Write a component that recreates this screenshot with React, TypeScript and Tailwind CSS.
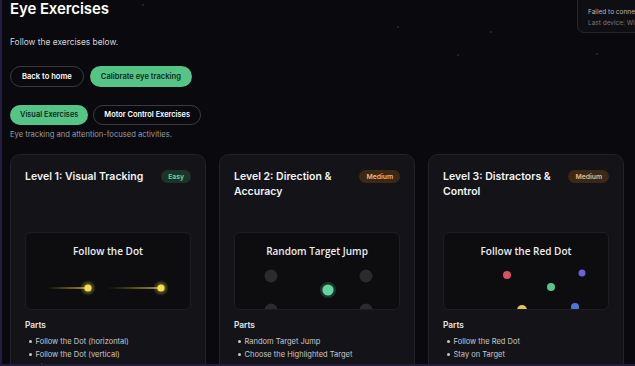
import React from "react";

type Level = {
  title: string;
  badge: string;
  tone: "easy" | "medium";
  preview: string;
  parts: string[];
  scene: React.ReactNode;
};

function DotTrail() {
  return (
    <svg width="165" height="78" className="absolute inset-0">
      <defs>
        <linearGradient id="trail" x1="0" x2="1" y1="0" y2="0">
          <stop offset="0" stopColor="#e8d34a" stopOpacity="0" />
          <stop offset="1" stopColor="#e8d34a" stopOpacity="0.8" />
        </linearGradient>
        <radialGradient id="glow">
          <stop offset="0" stopColor="#f5e35a" stopOpacity="0.6" />
          <stop offset="1" stopColor="#f5e35a" stopOpacity="0" />
        </radialGradient>
      </defs>
      <rect x="21" y="54.2" width="40" height="1.6" fill="url(#trail)" />
      <rect x="82" y="54.2" width="52" height="1.6" fill="url(#trail)" />
      <circle cx="62" cy="55" r="8" fill="url(#glow)" />
      <circle cx="135" cy="55" r="8" fill="url(#glow)" />
      <circle cx="62" cy="55" r="3.6" fill="#f3e04e" />
      <circle cx="135" cy="55" r="3.6" fill="#f3e04e" />
    </svg>
  );
}

function TargetJump() {
  return (
    <svg width="165" height="78" className="absolute inset-0">
      <circle cx="36" cy="43" r="6.5" fill="#2b2a2f" />
      <circle cx="131" cy="43" r="6.5" fill="#2b2a2f" />
      <circle cx="36" cy="77" r="6.5" fill="#2b2a2f" />
      <circle cx="131" cy="77" r="6.5" fill="#2b2a2f" />
      <circle cx="93" cy="57" r="8" fill="#5fd49a" opacity="0.2" />
      <circle cx="93" cy="57" r="5.6" fill="#62d69c" />
    </svg>
  );
}

function RedDot() {
  return (
    <svg width="165" height="78" className="absolute inset-0">
      <circle cx="63" cy="42" r="4" fill="#d9505e" />
      <circle cx="138" cy="40" r="3.5" fill="#6a62d6" />
      <circle cx="107" cy="54" r="4" fill="#56c48d" />
      <circle cx="131" cy="74" r="4" fill="#4677dc" />
      <circle cx="78" cy="77" r="5" fill="#e3c45a" />
    </svg>
  );
}

const levels: Level[] = [
  {
    title: "Level 1: Visual Tracking",
    badge: "Easy",
    tone: "easy",
    preview: "Follow the Dot",
    parts: ["Follow the Dot (horizontal)", "Follow the Dot (vertical)", "Circle Path"],
    scene: <DotTrail />,
  },
  {
    title: "Level 2: Direction & Accuracy",
    badge: "Medium",
    tone: "medium",
    preview: "Random Target Jump",
    parts: ["Random Target Jump", "Choose the Highlighted Target"],
    scene: <TargetJump />,
  },
  {
    title: "Level 3: Distractors & Control",
    badge: "Medium",
    tone: "medium",
    preview: "Follow the Red Dot",
    parts: ["Follow the Red Dot", "Stay on Target"],
    scene: <RedDot />,
  },
];

const stars = [
  [140, 4], [488, 31], [455, 54], [594, 53], [605, 170], [525, 190], [395, 26], [470, 160],
];

export default function App() {
  return (
    <div
      className="relative w-[635px] h-[366px] overflow-hidden bg-[#0a0a0e] border-l-2 border-b-2 border-[#221c3f] text-white"
      style={{ fontFamily: "Inter, 'Noto Sans', sans-serif" }}
    >
      {/* faint stars */}
      {stars.map(([x, y], i) => (
        <div
          key={i}
          className="absolute w-[2px] h-[2px] rounded-full bg-[#2a2a35]"
          style={{ left: x, top: y }}
        />
      ))}

      {/* connection toast, cut off at the corner */}
      <div className="absolute left-[575px] top-[-12px] w-[120px] h-[45px] rounded-[7px] border border-[#26262c] bg-[#0f0f13] pl-[10px] pt-[18px]">
        <div className="text-[6.5px] leading-[11px] text-[#b8b8be] whitespace-nowrap">Failed to connect</div>
        <div className="text-[6.5px] leading-[11px] text-[#77777e] whitespace-nowrap">Last device: Wii</div>
      </div>

      <div className="relative pl-[8px] pr-[11px]">
        <h1 className="mt-0 text-[15px] leading-[18px] font-semibold tracking-[-0.1px]">Eye Exercises</h1>
        <p className="mt-[18px] text-[8.4px] leading-[12px] text-[#d4d4d8]">Follow the exercises below.</p>

        <div className="mt-[18px] flex gap-[6px]">
          <button className="h-[21px] px-[11px] rounded-full border border-[#3a3a40] text-[7.6px] font-semibold text-white">
            Back to home
          </button>
          <button className="h-[21px] px-[11px] rounded-full bg-[#57c487] text-[7.6px] font-semibold text-[#0e2a1a]">
            Calibrate eye tracking
          </button>
        </div>

        <div className="mt-[18px] flex gap-[5px]">
          <button className="h-[20px] px-[10px] rounded-full bg-[#57c487] text-[7.4px] font-semibold text-[#0e2a1a]">
            Visual Exercises
          </button>
          <button className="h-[20px] px-[10px] rounded-full border border-[#3a3a40] text-[7.4px] font-semibold text-white">
            Motor Control Exercises
          </button>
        </div>
        <p className="mt-[4px] text-[7.6px] leading-[11px] text-[#9a9aa0]">
          Eye tracking and attention-focused activities.
        </p>

        <div className="mt-[14px] grid grid-cols-3 gap-[13px]">
          {levels.map((lv) => (
            <div
              key={lv.title}
              className="h-[240px] rounded-[10px] border border-[#222228] bg-[#141418] px-[14px] pt-[14px]"
            >
              <div className="flex items-start justify-between gap-[8px] h-[50px]">
                <div className="flex-1 min-w-0 text-[10.5px] leading-[15px] font-semibold text-[#f2f2f4]">
                  {lv.title}
                </div>
                <span
                  className={
                    lv.tone === "easy"
                      ? "shrink-0 mt-[1px] h-[13px] px-[7px] rounded-full bg-[#1b3628] text-[6.8px] leading-[13px] font-semibold text-[#7ad3a0]"
                      : "shrink-0 mt-[1px] h-[13px] px-[7px] rounded-full bg-[#3a2915] text-[6.8px] leading-[13px] font-semibold text-[#e8b98a]"
                  }
                >
                  {lv.badge}
                </span>
              </div>

              <div className="relative mt-[13px] h-[78px] overflow-hidden rounded-[6px] border border-[#1d1d22] bg-[#0d0d10]">
                <div
                  className="relative pt-[11px] text-center text-[10px] leading-[14px] font-semibold text-[#ececef]"
                  style={{ fontFamily: "'Open Sans', 'Noto Sans', sans-serif" }}
                >
                  {lv.preview}
                </div>
                {lv.scene}
              </div>

              <div className="mt-[9px] text-[8.3px] leading-[12px] font-semibold text-[#e4e4e7]">Parts</div>
              <ul className="mt-[4px] pl-[4px]">
                {lv.parts.map((p) => (
                  <li key={p} className="flex items-center gap-[4px] text-[7.5px] leading-[13px] text-[#c8c8cd]">
                    <span className="w-[2.5px] h-[2.5px] rounded-full bg-[#c8c8cd]" />
                    {p}
                  </li>
                ))}
              </ul>
            </div>
          ))}
        </div>
      </div>
    </div>
  );
}
